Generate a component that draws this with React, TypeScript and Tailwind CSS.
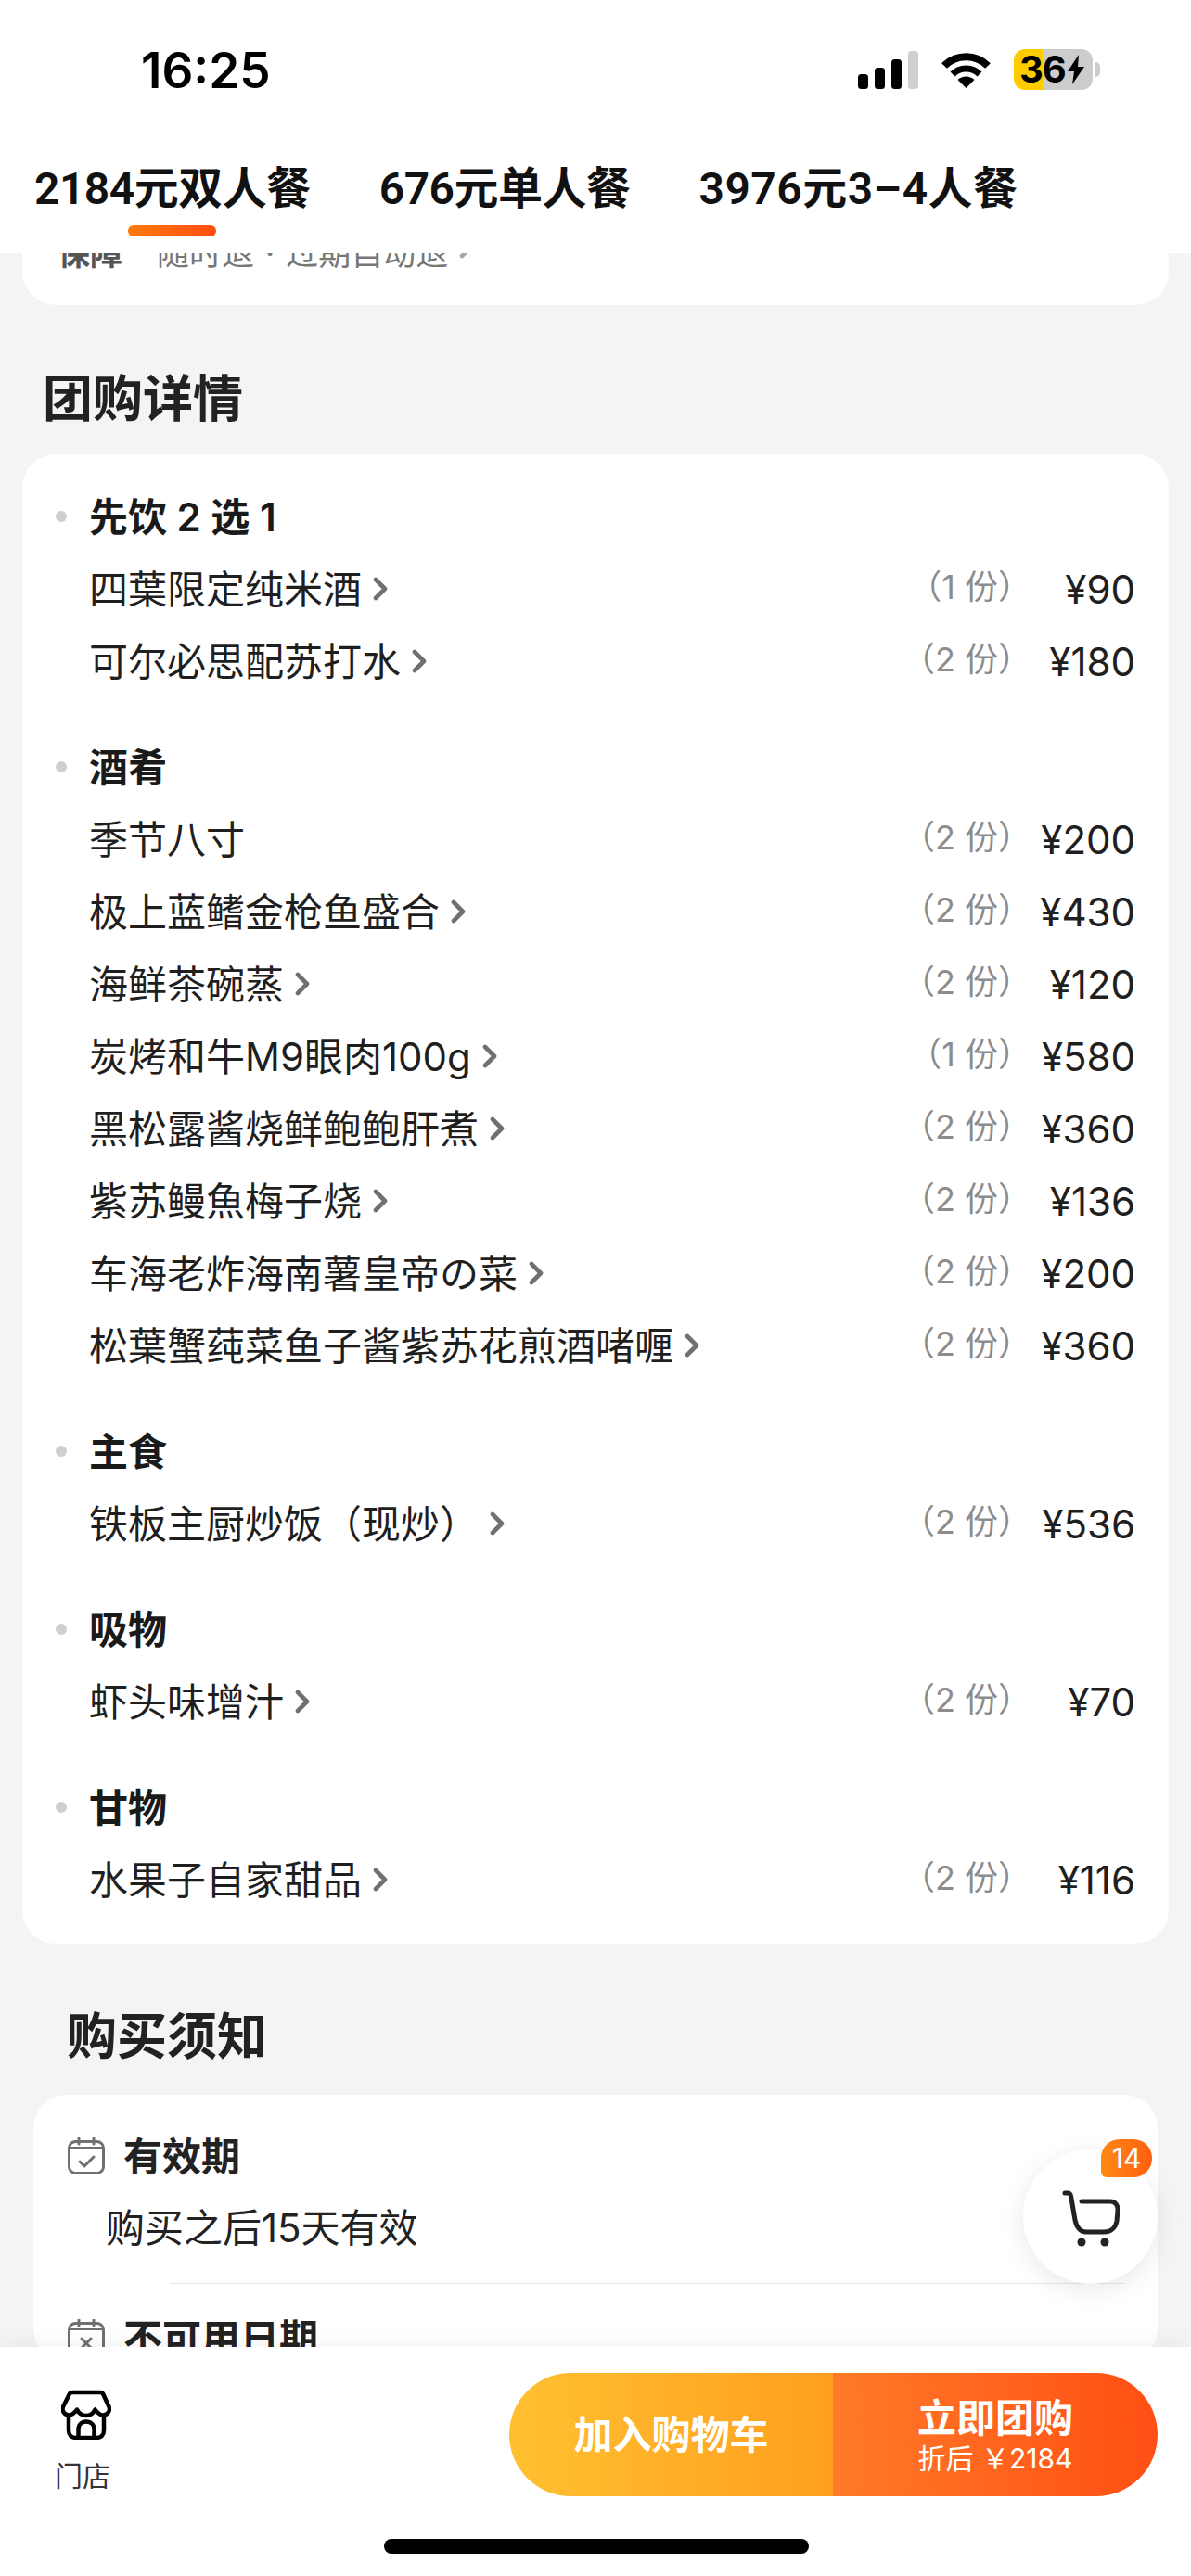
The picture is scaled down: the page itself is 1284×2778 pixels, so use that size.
const font = "font-['Inter','Noto_Sans_CJK_SC',sans-serif]";

type Item = { name: string; qty: number; price: number; plain?: boolean };
type Group = { title: string; items: Item[] };

const groups: Group[] = [
  {
    title: '先饮 2 选 1',
    items: [
      { name: '四葉限定纯米酒', qty: 1, price: 90 },
      { name: '可尔必思配苏打水', qty: 2, price: 180 },
    ],
  },
  {
    title: '酒肴',
    items: [
      { name: '季节八寸', qty: 2, price: 200, plain: true },
      { name: '极上蓝鳍金枪鱼盛合', qty: 2, price: 430 },
      { name: '海鲜茶碗蒸', qty: 2, price: 120 },
      { name: '炭烤和牛M9眼肉100g', qty: 1, price: 580 },
      { name: '黑松露酱烧鲜鲍鲍肝煮', qty: 2, price: 360 },
      { name: '紫苏鳗魚梅子烧', qty: 2, price: 136 },
      { name: '车海老炸海南薯皇帝の菜', qty: 2, price: 200 },
      { name: '松葉蟹莼菜鱼子酱紫苏花煎酒啫喱', qty: 2, price: 360 },
    ],
  },
  { title: '主食', items: [{ name: '铁板主厨炒饭（现炒）', qty: 2, price: 536 }] },
  { title: '吸物', items: [{ name: '虾头味增汁', qty: 2, price: 70 }] },
  { title: '甘物', items: [{ name: '水果子自家甜品', qty: 2, price: 116 }] },
];

function Chevron({ color = '#707070' }: { color?: string }) {
  return (
    <svg viewBox="0 0 16 26" className="ml-[12px] h-[26px] w-[16px] shrink-0" fill="none">
      <path d="M3 3l10 10L3 23" stroke={color} strokeWidth="4.6" strokeLinecap="round" strokeLinejoin="round" />
    </svg>
  );
}

function StatusBar() {
  return (
    <div className="flex h-[148px] items-start justify-between pl-[152px] pr-[98px] pt-[48px]">
      <span className="text-[53px] leading-[56px] font-semibold text-black">16:25</span>
      <div className="flex items-center gap-[23px] pt-[5px]">
        <svg viewBox="0 0 65 41" className="h-[41px] w-[65px]">
          <rect x="0" y="25" width="11" height="16" rx="3.5" fill="#000" />
          <rect x="18" y="18" width="11" height="23" rx="3.5" fill="#000" />
          <rect x="36" y="9" width="11" height="32" rx="3.5" fill="#000" />
          <rect x="54" y="0" width="11" height="41" rx="3.5" fill="#cfcfcf" />
        </svg>
        <svg viewBox="0 0 57 40" className="h-[40px] w-[57px]" fill="none" stroke="#000">
          <path d="M5 16a33 33 0 0 1 47 0" strokeWidth="8" />
          <path d="M14 25a20.5 20.5 0 0 1 29 0" strokeWidth="7" />
          <path d="M28.500 40l-9-9a13 13 0 0 1 18 0z" fill="#000" stroke="none" />
        </svg>
        <div className="flex items-center">
          <div className="flex h-[44px] w-[85px] items-center overflow-hidden rounded-[12px] bg-[linear-gradient(90deg,#ffcc00_0,#ffcc00_36%,#cccccc_36%,#cccccc_100%)] pl-[6px]">
            <span className="text-[40px] leading-[44px] font-bold tracking-[-1px] text-black">36</span>
            <svg viewBox="0 0 20 32" className="ml-[1px] h-[32px] w-[20px]">
              <path d="M13 0L1 18h7l-2 14L19 13h-7z" fill="#000" />
            </svg>
          </div>
          <div className="ml-[3px] h-[16px] w-[5px] rounded-r-full bg-[#cccccc]" />
        </div>
      </div>
    </div>
  );
}

function Tabs() {
  return (
    <div className="h-[125px] bg-white">
      <div className="flex gap-[74px] pt-[26px] pl-[37px] font-['Roboto','Noto_Sans_CJK_SC',sans-serif] text-[48px] leading-[60px] font-semibold text-[#111]">
        <div className="relative tracking-[-0.5px]">
          2184元双人餐
          <div className="absolute top-[69px] left-[101px] h-[12px] w-[95px] rounded-full bg-[linear-gradient(90deg,#ff7a0a,#ff4d12)]" />
        </div>
        <div className="tracking-[-0.5px]">676元单人餐</div>
        <div className="tracking-[0.5px]">3976元3–4人餐</div>
      </div>
    </div>
  );
}

function DetailCard() {
  return (
    <div className="mx-[24px] rounded-[36px] bg-white pt-[28px] pb-[30px]">
      <div className="flex flex-col gap-[36px]">
        {groups.map((g) => (
          <div key={g.title}>
            <div className="flex h-[78px] items-center pl-[36px]">
              <span className="mr-[24px] h-[12px] w-[12px] rounded-full bg-[#cfcfcf]" />
              <span className="text-[42px] font-semibold text-[#1a1a1a]">{g.title}</span>
            </div>
            {g.items.map((it) => (
              <div key={it.name} className="flex h-[78px] items-center pr-[36px] pl-[72px]">
                <span className="text-[42px] text-[#1f1f1f]">{it.name}</span>
                {!it.plain && <Chevron />}
                <span className="ml-auto pb-[4px] text-[36px] text-[#8c8c8c]">（{it.qty} 份）</span>
                <span className="w-[112px] text-right text-[42px] text-[#1f1f1f]">¥{it.price}</span>
              </div>
            ))}
          </div>
        ))}
      </div>
    </div>
  );
}

function CalIcon({ cross }: { cross?: boolean }) {
  return (
    <svg viewBox="0 0 40 40" className="h-[40px] w-[40px] shrink-0" fill="none" stroke="#707070" strokeWidth="3" strokeLinecap="round" strokeLinejoin="round">
      <rect x="1.500" y="4.500" width="37" height="34" rx="7" />
      <path d="M2 11h36" strokeWidth="1.800" />
      <path d="M12 1v6M28 1v6" />
      {cross ? <path d="M15 21l10 10M25 21L15 31" /> : <path d="M13 26l5 5 10-10" />}
    </svg>
  );
}

function NoticeCard() {
  return (
    <div className="mx-[36px] rounded-[36px] bg-white pt-[40px]">
      <div className="flex h-[52px] items-center pl-[37px]">
        <CalIcon />
        <span className="ml-[20px] text-[42px] font-semibold text-[#222]">有效期</span>
      </div>
      <div className="mt-[26px] pl-[78px] text-[42px] leading-[52px] text-[#222]">购买之后15天有效</div>
      <div className="mt-[33px] mr-[36px] ml-[147px] h-[1px] bg-[#e6e6e6]" />
      <div className="mt-[32px] flex h-[52px] items-center pl-[37px]">
        <CalIcon cross />
        <span className="ml-[20px] text-[42px] font-semibold text-[#222]">不可用日期</span>
      </div>
    </div>
  );
}

function CartFab() {
  return (
    <div className="absolute top-[2318px] left-[1103px] flex h-[145px] w-[145px] items-center justify-center rounded-full bg-white shadow-[0_6px_28px_rgba(0,0,0,0.09)]">
      <svg viewBox="0 0 62 62" className="mt-[5px] h-[62px] w-[62px]" fill="none" stroke="#222" strokeWidth="5" strokeLinecap="round" strokeLinejoin="round">
        <path d="M3 3h3c2 0 3 1 3.500 3L14 32c1.500 8 6 13 12 13h19c8 0 13-5 14-12l1-11c.5-6-3-10-8-10H21" />
        <circle cx="21" cy="56" r="4.500" fill="#222" stroke="none" />
        <circle cx="46" cy="56" r="4.500" fill="#222" stroke="none" />
      </svg>
      <div className="absolute top-[-11px] left-[84px] flex h-[41px] w-[55px] items-center justify-center rounded-[20px] rounded-bl-[6px] bg-[linear-gradient(90deg,#ff8a14,#ff5f12)] text-[30px] text-white">14</div>
    </div>
  );
}

function BottomBar() {
  return (
    <div className="relative z-10 h-[247px] shrink-0 bg-white shadow-[0_-8px_20px_rgba(0,0,0,0.04)]">
      <div className="flex items-start pt-[28px] pr-[36px]">
        <div className="flex w-[178px] flex-col items-center pt-[18px]">
          <svg viewBox="0 0 54 54" className="ml-[8px] h-[54px] w-[54px]" fill="none" stroke="#000" strokeWidth="4.500" strokeLinecap="round" strokeLinejoin="round">
            <path d="M12 3h30c1.500 0 3 1 3.500 2.500l6 13c1.500 4-1 8.500-6 9-3 .3-6-2-9-6-2 4-4.500 6.500-9.500 6.500S19 25.500 17 21.500c-3 4-6 6.300-9 6-5-.5-7.500-5-6-9l6.500-13C9 4 10.500 3 12 3z" />
            <path d="M8 28v16c0 5 3 8 8 8h22c5 0 8-3 8-8V28" />
            <path d="M18.500 52V43c0-5 3.500-8.500 8.500-8.500s8.500 3.500 8.500 8.500v9" />
          </svg>
          <span className="mt-[21px] text-[30px] leading-[36px] text-[#333]">门店</span>
        </div>
        <div className="ml-auto flex h-[133px] w-[699px] overflow-hidden rounded-full text-white">
          <div className="flex w-[349px] items-center justify-center bg-[linear-gradient(90deg,#ffc030,#ff9f1f)] text-[42px] font-semibold">加入购物车</div>
          <div className="flex flex-1 flex-col items-center justify-center bg-[linear-gradient(90deg,#ff7a28,#ff4f14)]">
            <span className="text-[42px] leading-[50px] font-semibold">立即团购</span>
            <span className="text-[30px] leading-[36px]">折后 ￥2184</span>
          </div>
        </div>
      </div>
      <div className="absolute top-[207px] left-[414px] h-[16px] w-[458px] rounded-full bg-black" />
    </div>
  );
}

export default function App() {
  return (
    <div className={`${font} relative flex h-[2778px] w-[1284px] flex-col overflow-hidden bg-[#f4f4f4]`}>
      <div className="relative z-10 shrink-0 bg-white">
        <StatusBar />
        <Tabs />
      </div>
      <div className="min-h-0 flex-1 overflow-hidden">
        <div className="mx-[24px] -mt-[24px] flex h-[80px] items-start rounded-b-[36px] bg-white pt-[4px] pl-[38px] text-[35px] leading-[40px] text-[#777]">
          <span className="font-semibold text-[#555]">保障</span>
          <span className="ml-[37px]">随时退</span>
          <span className="mx-[12px]">·</span>
          <span>过期自动退</span>
          <Chevron color="#a8a8a8" />
        </div>
        <h2 className="mt-[70px] mb-[27px] pl-[46px] text-[54px] leading-[64px] font-semibold text-[#222]">团购详情</h2>
        <DetailCard />
        <h2 className="mt-[69px] mb-[30px] pl-[72px] text-[54px] leading-[64px] font-semibold text-[#222]">购买须知</h2>
        <NoticeCard />
      </div>
      <BottomBar />
      <CartFab />
    </div>
  );
}
